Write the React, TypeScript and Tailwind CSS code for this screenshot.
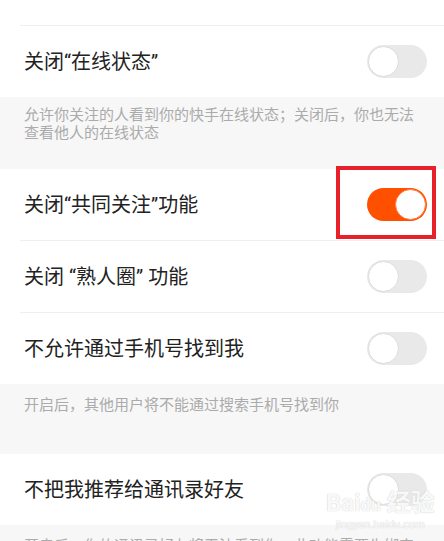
import React from 'react'

const font = { fontFamily: 'Roboto, "Noto Sans CJK SC", sans-serif' }

function Toggle({ on }: { on?: boolean }) {
    if (on) {
        return (
            <div className="flex h-[33px] w-[60px] items-center justify-end rounded-full bg-[#ff5000] p-[1px]">
                <div className="h-[31px] w-[31px] rounded-full border border-[#ff7a3d] bg-white" />
            </div>
        )
    }
    return (
        <div className="flex h-[33px] w-[60px] items-center rounded-full bg-[#e9e9e9] p-[1px]">
            <div className="h-[31px] w-[31px] rounded-full border border-[#dcdcdc] bg-white" />
        </div>
    )
}

function Row({ label, on, children }: { label: string; on?: boolean; children?: React.ReactNode }) {
    return (
        <div className="relative flex h-[71px] items-center justify-between bg-white pl-6 pr-[17px]">
            <span className="text-[20px] text-[#222]">{label}</span>
            <Toggle on={on} />
            {children}
        </div>
    )
}

function Divider() {
    return (
        <div className="bg-white pl-5">
            <div className="h-px bg-[#efefef]" />
        </div>
    )
}

export default function App() {
    return (
        <div className="relative h-[541px] w-[444px] overflow-hidden bg-[#f7f7f7]" style={font}>
            <div className="h-[25px] bg-white" />
            <Divider />
            <Row label="关闭“在线状态”" />
            <div className="h-[72px] px-6 pt-[9px] text-[15px] leading-[18px] text-[#ababab]">
                允许你关注的人看到你的快手在线状态；关闭后，你也无法查看他人的在线状态
            </div>
            <Row label="关闭“共同关注”功能" on>
                <div className="absolute -top-[3px] right-[8px] h-[73px] w-[100px] border-4 border-[#e8202a]" />
            </Row>
            <Divider />
            <Row label="关闭 “熟人圈” 功能" />
            <Divider />
            <Row label="不允许通过手机号找到我" />
            <div className="h-[70px] px-6 pt-[12px] text-[15px] leading-[18px] text-[#ababab]">
                开启后，其他用户将不能通过搜索手机号找到你
            </div>
            <Row label="不把我推荐给通讯录好友" />
            <div className="px-6 pt-[12px] text-[15px] leading-[18px] text-[#ababab] whitespace-nowrap">
                开启后，你的通讯录好友将无法看到你，此功能需要先绑定
            </div>

            <div className="pointer-events-none absolute left-[326px] top-[490px] flex flex-col items-center text-white/90 [text-shadow:0_0_1px_#bbb]">
                <div className="text-[24px] font-bold leading-[26px]">Bai<span className="text-[18px]">du</span> 经验</div>
                <div className="text-[11px] leading-[14px]">jingyan.baidu.com</div>
            </div>
        </div>
    )
}
